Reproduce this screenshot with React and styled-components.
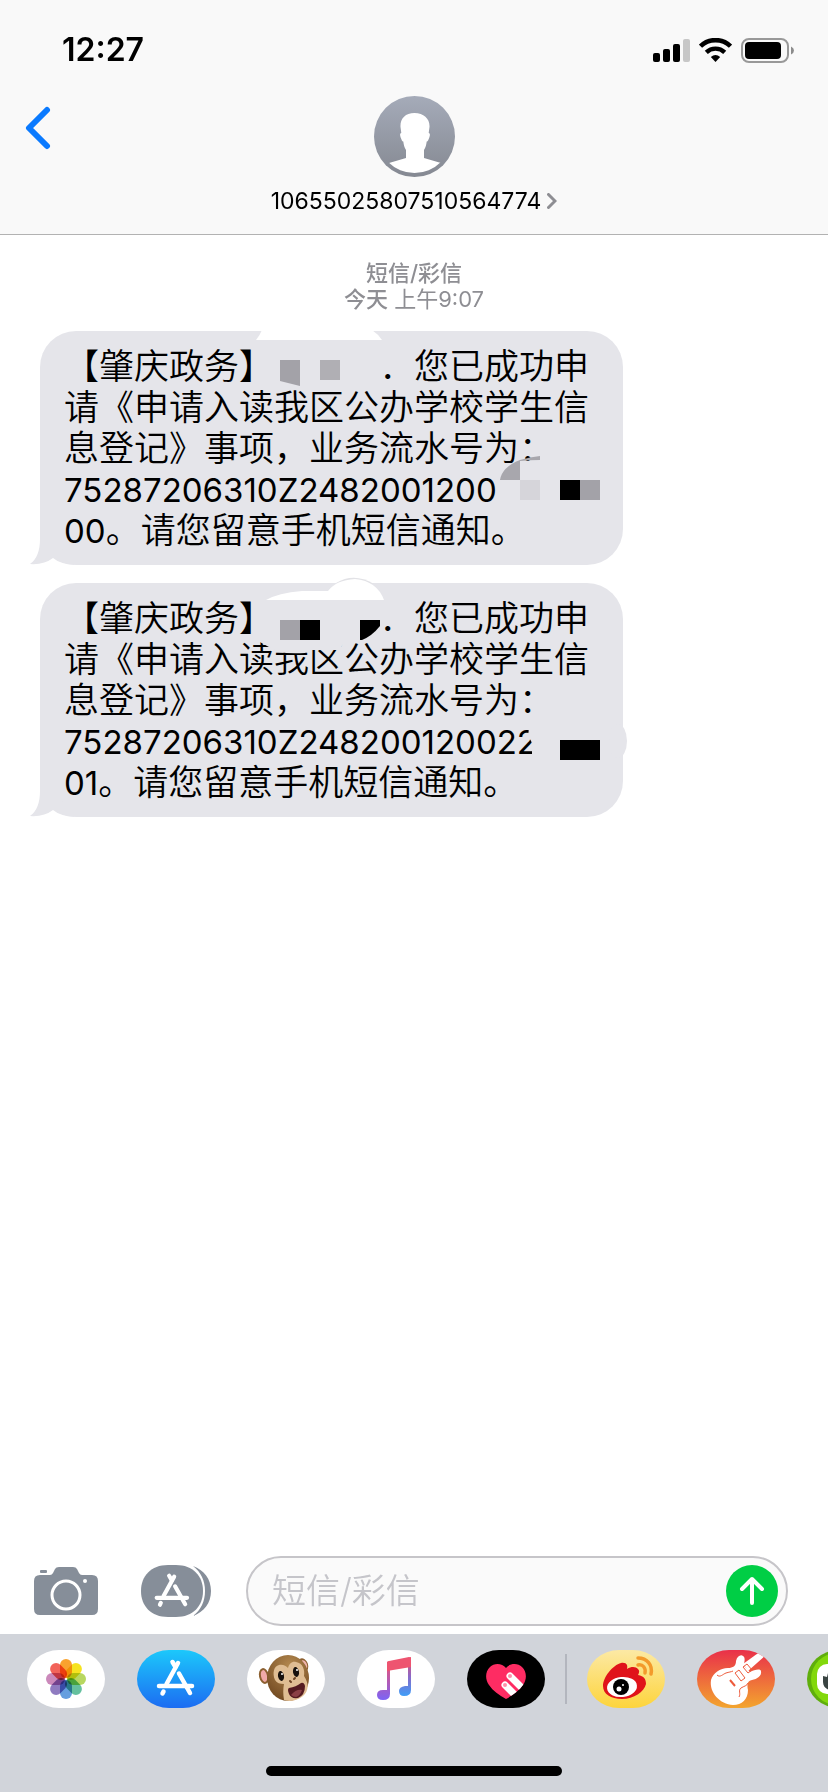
import React from 'react';
import styled, { createGlobalStyle } from 'styled-components';

const GlobalStyle = createGlobalStyle`
    * {
        box-sizing: border-box;
    }
    body {
        margin: 0;
        background: #fff;
        color: #000;
        font-family: Inter, "Noto Sans CJK SC", sans-serif;
        overflow-x: hidden;
    }
    button {
        border: 0;
        padding: 0;
        background: none;
        font: inherit;
        color: inherit;
        cursor: pointer;
    }
    svg {
        display: block;
    }
`;

const Page = styled.div`
    display: flex;
    flex-direction: column;
    min-height: 100vh;
    overflow: hidden;
`;

const Header = styled.header`
    background: #f9f9f9;
    border-bottom: 1px solid #b2b2b2;
`;

const StatusBar = styled.div`
    display: flex;
    justify-content: space-between;
    align-items: center;
    height: 96px;
    padding: 4px 34px 0 62px;
`;

const Clock = styled.time`
    font-size: 32px;
    font-weight: 600;
    line-height: 40px;
`;

const StatusIcons = styled.div`
    display: flex;
    align-items: center;
    gap: 9px;
`;

const NavBar = styled.nav`
    display: grid;
    grid-template-columns: 80px 1fr 80px;
    align-items: start;
    height: 138px;
`;

const BackButton = styled.button`
    width: 80px;
    padding: 10px 0 0 24px;
`;

const Contact = styled.button`
    display: flex;
    flex-direction: column;
    align-items: center;
    gap: 10px;
`;

const ContactName = styled.span`
    display: flex;
    align-items: center;
    gap: 6px;
    font-size: 23px;
    line-height: 28px;
`;

const Thread = styled.main`
    flex: 1;
    padding: 25px 40px;
`;

const Stamp = styled.div`
    color: #8e8e93;
    font-size: 22px;
    line-height: 26px;
    text-align: center;
    margin-bottom: 19px;

    strong {
        font-weight: 500;
    }
`;

const Bubble = styled.article`
    position: relative;
    width: fit-content;
    margin-bottom: 18px;
    padding: 15px 34px 14px 24px;
    border-radius: 36px;
    background: #e5e5ea;
    font-size: 35px;
    font-weight: 350;
    line-height: 41px;
    white-space: nowrap;

    p {
        margin: 0;
    }
`;

const Digits = styled.span`
    font-size: 33px;
    font-weight: 400;
    line-height: 1;
`;

const Blank = styled.span`
    display: inline-block;
    width: 3em;
`;

const Overlay = styled.svg`
    position: absolute;
    left: 0;
    top: 0;
    overflow: visible;
    pointer-events: none;
`;

const Compose = styled.form`
    display: flex;
    align-items: center;
    padding: 0 40px 8px 34px;
`;

const ToolButton = styled.button`
    flex: none;
    margin-right: ${(props) => props.$gap}px;
`;

const Field = styled.label`
    flex: 1;
    display: flex;
    align-items: center;
    min-width: 0;
    height: 70px;
    padding: 0 8px 0 24px;
    border: 2px solid #c6c5c9;
    border-radius: 35px;
    background: #fafafa;
`;

const TextInput = styled.input`
    flex: 1;
    min-width: 0;
    border: 0;
    padding: 0;
    outline: none;
    background: none;
    font-family: inherit;
    font-size: 34px;
    line-height: 48px;

    &::placeholder {
        color: #c5c5ca;
        font-weight: 350;
        opacity: 1;
    }
`;

const SendButton = styled.button`
    flex: none;
`;

const Drawer = styled.footer`
    display: flex;
    flex-direction: column;
    justify-content: space-between;
    align-items: center;
    height: 158px;
    padding: 16px 0;
    background: #d1d4da;
`;

const AppList = styled.div`
    display: flex;
    align-items: center;
    align-self: stretch;
    gap: 32px;
    padding-left: 27px;
    overflow: hidden;
`;

const AppButton = styled.button`
    flex: none;
    width: 78px;
    height: 58px;
    border-radius: 32px / 29px;
    background: ${(props) => props.$fill};
    overflow: hidden;
`;

const Divider = styled.span`
    flex: none;
    width: 2px;
    height: 50px;
    margin: 0 -12px;
    background: #b3b6be;
`;

const HomeBar = styled.div`
    width: 296px;
    height: 10px;
    border-radius: 5px;
    background: #000;
`;

const Signal = () => (
    <svg width="37" height="25" viewBox="0 0 37 25">
        <rect x="0" y="15" width="7" height="9" rx="2" />
        <rect x="10" y="11" width="7" height="13" rx="2" />
        <rect x="20" y="6" width="7" height="18" rx="2" />
        <rect x="30" y="1" width="7" height="23" rx="2" fill="#c7c7c7" />
    </svg>
);

const Wifi = () => (
    <svg width="33" height="25" viewBox="0 0 33 25">
        <path d="M1.5 8.2a21.5 21.5 0 0 1 30 0" fill="none" stroke="#000" strokeWidth="4.6" />
        <path d="M7.3 14.3a13.3 13.3 0 0 1 18.4 0" fill="none" stroke="#000" strokeWidth="4.4" />
        <path d="M11.8 19a7.4 7.4 0 0 1 9.4 0L16.5 24z" />
    </svg>
);

const Battery = () => (
    <svg width="53" height="25" viewBox="0 0 53 25">
        <rect x="1" y="1" width="46" height="23" rx="7" fill="none" stroke="#999" strokeWidth="2" />
        <rect x="4" y="4" width="36" height="17" rx="4" />
        <path d="M50 8.5q3 1.5 3 4t-3 4z" fill="#8c8c8c" />
    </svg>
);

const BackIcon = () => (
    <svg width="28" height="44" viewBox="0 0 28 44">
        <path d="M23 4L5 22L23 40" fill="none" stroke="#0a7aff" strokeWidth="6" strokeLinecap="round" strokeLinejoin="round" />
    </svg>
);

const Avatar = () => (
    <svg width="81" height="81" viewBox="0 0 81 81">
        <defs>
            <linearGradient id="avatar" x1="0" y1="0" x2="0" y2="1">
                <stop offset="0" stopColor="#a5abb9" />
                <stop offset="1" stopColor="#858992" />
            </linearGradient>
            <clipPath id="avatarClip"><circle cx="40.5" cy="40" r="37" /></clipPath>
        </defs>
        <circle cx="40.5" cy="40.5" r="40.5" fill="url(#avatar)" />
        <path
            clipPath="url(#avatarClip)"
            fill="#fff"
            d="M40.5 17C31 17 26 23 26.5 31l.8 6c-1.6.5-1.6 2 0 6 .6 2 1.5 2.4 2 2.6.4 3.4 1 5.6 2.7 8.4v8L15 67v14h52V67l-17-5v-8c1.7-2.8 2.3-5 2.7-8.4.5-.2 1.4-.6 2-2.6 1.6-4 1.6-5.5 0-6l.8-6C56 23 50 17 40.5 17z"
        />
    </svg>
);

const MoreIcon = () => (
    <svg width="10" height="16" viewBox="0 0 10 16">
        <path d="M1.5 1.5L8 8L1.5 14.5" fill="none" stroke="#8e8e93" strokeWidth="3" strokeLinecap="round" />
    </svg>
);

const Tail = () => (
    <path d="M0 194v14q0 18-10 25q14 1 23-6q7 6 22 7l-13-16-2-24z" fill="#e5e5ea" />
);

const FirstMarks = () => (
    <Overlay width="583" height="234" viewBox="0 0 583 234" aria-hidden="true">
        <Tail />
        <path d="M222-1q-2 5-6 10h126q-4-6-10-10z" fill="#fff" />
        <path d="M240 29h20v26l-20-5z" fill="#a3a2a8" />
        <path d="M280 29h20v20h-20z" fill="#b0afb4" />
        <path d="M336 14h30v21h-30z" fill="#e5e5ea" />
        <path d="M457 132h44v42h-44z" fill="#e5e5ea" />
        <path d="M460 149q2-13 20-20q10-3 20-4v4q-10 0-20 1v19z" fill="#a8a7ad" />
        <path d="M480 149h20v20h-20z" fill="#d6d5da" />
        <path d="M520 149h20v20h-20z" />
        <path d="M540 149h20v20h-20z" fill="#a3a2a8" />
    </Overlay>
);

const SecondMarks = () => (
    <Overlay width="583" height="234" viewBox="0 0 583 234" aria-hidden="true">
        <Tail />
        <ellipse cx="578" cy="158" rx="9" ry="17" fill="#e5e5ea" />
        <path d="M296 0q18-11 38 1z" fill="#e2e2e6" />
        <path d="M226 17q12-7 36-9h26q8-11 27-12q22 2 29 21z" fill="#fff" />
        <path d="M240 37h20v20h-20z" fill="#a3a2a8" />
        <path d="M260 37h20v20h-20z" />
        <path d="M336 17h30v18h-30z" fill="#e5e5ea" />
        <path d="M320 37h20v6q-8 10-18 14h-2z" />
        <path d="M218 58h86q-2 6-5 9h-32l-2 3q-15 1-27-1z" fill="#e5e5ea" />
        <path d="M490 140h24v34h-22v-14l-4-8z" fill="#e5e5ea" />
        <path d="M520 157h40v20h-40z" />
    </Overlay>
);

const CameraIcon = () => (
    <svg width="64" height="48" viewBox="0 0 64 48">
        <g fill="#868e99">
            <path d="M6 8h10q2 0 3-2l2-4q1-2 4-2h14q3 0 4 2l2 4q1 2 3 2h10q6 0 6 6v28q0 6-6 6H6q-6 0-6-6V14q0-6 6-6z" />
            <rect x="6" y="3" width="7" height="3" rx="1" />
        </g>
        <circle cx="32" cy="28" r="14" fill="none" stroke="#fff" strokeWidth="3" />
        <circle cx="51" cy="14" r="2" fill="#fff" />
    </svg>
);

const StoreMark = () => (
    <g fill="none" strokeLinecap="round" strokeLinejoin="round">
        <path d="M4 27H37" strokeWidth="4.5" />
        <path d="M23 4L11.5 25" strokeWidth="4.5" />
        <path d="M17.5 3L20.5 8" strokeWidth="4.5" />
        <path d="M24 14.5L35 34" strokeWidth="4.5" />
        <path d="M8.5 32.5L7.5 34.5" strokeWidth="4.5" />
    </g>
);

const AppsIcon = () => (
    <svg width="70" height="52" viewBox="0 0 70 52">
        <path d="M52 1c11 4 18 13 18 25s-7 21-18 25c8-6 12-15 12-25S60 7 52 1z" fill="#868e99" />
        <path d="M27 0h8c17 0 27 11 27 26S52 52 35 52h-8C10 52 0 41 0 26S10 0 27 0z" fill="#868e99" />
        <g transform="translate(12 8) scale(.92)" stroke="#fff"><StoreMark /></g>
    </svg>
);

const SendIcon = () => (
    <svg width="52" height="52" viewBox="0 0 52 52">
        <circle cx="26" cy="26" r="26" fill="#00ce45" />
        <path d="M26 38V14M16 24L26 14L36 24" fill="none" stroke="#fff" strokeWidth="4" strokeLinecap="round" strokeLinejoin="round" />
    </svg>
);

const petals = ['#f89a1c', '#f5e10d', '#b2d453', '#58bb96', '#5896dc', '#8570bb', '#c77fb5', '#f1564c'];

const PhotosIcon = () => (
    <svg width="78" height="58" viewBox="0 0 78 58">
        {petals.map((color, i) => (
            <rect
                key={color}
                x="33"
                y="9"
                width="12"
                height="19"
                rx="6"
                fill={color}
                fillOpacity="0.92"
                transform={`rotate(${i * 45} 39 29)`}
                style={{ mixBlendMode: 'multiply' }}
            />
        ))}
    </svg>
);

const StoreIcon = () => (
    <svg width="78" height="58" viewBox="0 0 78 58">
        <g transform="translate(18 9)" stroke="#fff"><StoreMark /></g>
    </svg>
);

const MonkeyIcon = () => (
    <svg width="78" height="58" viewBox="0 0 78 58">
        <defs>
            <radialGradient id="fur" cx=".55" cy=".25" r=".8">
                <stop offset="0" stopColor="#b58a50" />
                <stop offset="1" stopColor="#6f4720" />
            </radialGradient>
        </defs>
        <ellipse cx="17" cy="26" rx="5" ry="8" fill="#8c6030" transform="rotate(-12 17 26)" />
        <ellipse cx="17" cy="26" rx="3" ry="6" fill="#f0a9a8" transform="rotate(-12 17 26)" />
        <ellipse cx="56" cy="15" rx="5" ry="7" fill="#8c6030" transform="rotate(-20 56 15)" />
        <ellipse cx="57" cy="15" rx="3" ry="5" fill="#f0b4ac" transform="rotate(-20 57 15)" />
        <ellipse cx="41" cy="28" rx="21" ry="23" fill="url(#fur)" />
        <path d="M28 30c-3-7-1-14 4-15 4-1 7 1 9 3 1-4 4-7 8-6 7 1 9 8 8 14 5 7 5 15-1 20-6 5-14 6-19 4-1-6-1-11 0-16-4 0-7-1-9-4z" fill="#dfbd93" />
        <ellipse cx="34" cy="26" rx="3" ry="5" fill="#17110d" transform="rotate(-10 34 26)" />
        <ellipse cx="49" cy="22" rx="3" ry="5" fill="#17110d" transform="rotate(-10 49 22)" />
        <circle cx="35" cy="24" r="1" fill="#fff" />
        <circle cx="50" cy="20" r="1" fill="#fff" />
        <path d="M43 31l1 1M47 29l1-1" stroke="#6d4425" strokeWidth="2" strokeLinecap="round" />
        <path d="M42 38q7-1 12-5q3-1 4 3q0 9-7 12q-7 1-9-4q-2-5 0-6z" fill="#541b21" />
        <path d="M44 45q5-6 11-5q-2 6-6 7q-3 0-5-2z" fill="#8a3f45" />
    </svg>
);

const MusicIcon = () => (
    <svg width="78" height="58" viewBox="0 0 78 58">
        <defs>
            <linearGradient id="stemLeft" x1="0" y1="0" x2="0" y2="1">
                <stop offset="0" stopColor="#f0526d" />
                <stop offset="1" stopColor="#7c63f5" />
            </linearGradient>
            <linearGradient id="stemRight" x1="0" y1="0" x2="0" y2="1">
                <stop offset="0" stopColor="#ee4f69" />
                <stop offset=".5" stopColor="#8a68c8" />
                <stop offset="1" stopColor="#3f9ef8" />
            </linearGradient>
        </defs>
        <path d="M30 12L33 11V44q0 6-7 6-6 0-6-5t6-5h4z" fill="url(#stemLeft)" />
        <path d="M51 8l3-1V40q0 6-7 6-5 0-5-5 0-4 6-5h3z" fill="url(#stemRight)" />
        <path d="M30 13q0-2 2-2L52 7q2 0 2 2v8L30 21z" fill="#ee5470" />
    </svg>
);

const HeartIcon = () => (
    <svg width="78" height="58" viewBox="0 0 78 58">
        <defs>
            <clipPath id="heart">
                <path d="M39 18c4-5 12-5 16-1 5 5 5 12 1 18-4 6-10 10-17 14-7-4-13-8-17-14-4-6-4-13 1-18 4-4 12-4 16 1z" />
            </clipPath>
        </defs>
        <g clipPath="url(#heart)">
            <path d="M0 0h78v58H0z" fill="#fe2c63" />
            <g stroke="#fff" strokeWidth="7" strokeLinecap="round">
                <path d="M43 26l18 18M38 35l16 16" />
            </g>
            <circle cx="43" cy="26" r="2" fill="#ff8faa" />
            <circle cx="38" cy="35" r="2" fill="#ff8faa" />
        </g>
    </svg>
);

const WeiboIcon = () => (
    <svg width="78" height="58" viewBox="0 0 78 58">
        <path d="M16 36c0-9 10-21 18-23 6-1 7 3 6 6 5-3 9-2 11 0 2 2 1 4 0 6 6 1 8 4 8 9-2 8-12 15-24 15-11 0-19-5-19-13z" fill="#e0131a" />
        <ellipse cx="35" cy="37" rx="15" ry="10" fill="#fff" transform="rotate(-6 35 37)" />
        <circle cx="34" cy="37" r="8" />
        <circle cx="32" cy="39" r="2.500" fill="#fff" />
        <circle cx="36" cy="35" r="1" fill="#fff" />
        <g fill="none" stroke="#f39a2b" strokeWidth="3.500" strokeLinecap="round">
            <path d="M51 8c9 0 15 7 13 16" />
            <path d="M51 15c5-1 8 3 7 8" />
        </g>
    </svg>
);

const GuitarIcon = () => (
    <svg width="78" height="58" viewBox="0 0 78 58">
        <g fill="#fff">
            <path d="M14 30c2-7 9-12 17-12 5 0 8-2 8-7 1-5 5-7 7-5 3 2 1 6 1 10l6 6c4-2 10-4 11-1 1 5-4 8-9 9-5 1-5 5-4 10 0 9-6 15-15 15-13-1-24-12-22-25z" />
            <path d="M46 14L64 1l5 4-18 16z" />
        </g>
        <g fill="none" stroke="#ed5a3b" strokeWidth="1">
            <path d="M20 25c3 3 6-1 9-2s5-1 7-2M42 47c2-3-1-7 2-9s6-2 7-5" />
            <path d="M38 23l4-3 6 8-4 3zM46 17l4-3 5 6-4 3z" />
            <path d="M33 30l5 6" strokeWidth="2" />
        </g>
    </svg>
);

const FaceIcon = () => (
    <svg width="78" height="58" viewBox="0 0 78 58">
        <rect x="4" y="3" width="70" height="52" rx="26" fill="#82d80b" />
        <rect x="10" y="14" width="58" height="30" rx="10" fill="#fff" />
        <path d="M16 26l4 1 1-4 3 1v16c-4 0-8-3-8-8z" fill="#3a4442" />
    </svg>
);

const apps = [
    { name: '照片', fill: '#fff', icon: <PhotosIcon /> },
    { name: 'App Store', fill: 'linear-gradient(#1cc8fb, #1c6cf2)', icon: <StoreIcon /> },
    { name: '拟我表情', fill: '#fff', icon: <MonkeyIcon /> },
    { name: '音乐', fill: '#fff', icon: <MusicIcon /> },
    { name: 'Digital Touch', fill: '#000', icon: <HeartIcon /> },
];

const moreApps = [
    { name: '微博', fill: 'linear-gradient(#fce9a4, #fdd43c)', icon: <WeiboIcon /> },
    { name: '库乐队', fill: 'linear-gradient(#e9304a, #f3a52e)', icon: <GuitarIcon /> },
    { name: '贴纸', fill: '#5fae0c', icon: <FaceIcon /> },
];

const renderApp = (app) => (
    <AppButton key={app.name} type="button" aria-label={app.name} $fill={app.fill}>
        {app.icon}
    </AppButton>
);

const Message = (props) => (
    <Bubble>
        <p>
            【肇庆政务】<Blank />：您已成功申<br />
            请《申请入读我区公办学校学生信<br />
            息登记》事项，业务流水号为：<br />
            <Digits>{props.serial}</Digits><br />
            <Digits>{props.suffix}</Digits>。请您留意手机短信通知。
        </p>
        {props.children}
    </Bubble>
);

const App = () => {
    return (
        <>
            <GlobalStyle />
            <Page>
                <Header>
                    <StatusBar>
                        <Clock>12:27</Clock>
                        <StatusIcons>
                            <Signal />
                            <Wifi />
                            <Battery />
                        </StatusIcons>
                    </StatusBar>
                    <NavBar>
                        <BackButton type="button" aria-label="返回"><BackIcon /></BackButton>
                        <Contact type="button">
                            <Avatar />
                            <ContactName>10655025807510564774<MoreIcon /></ContactName>
                        </Contact>
                    </NavBar>
                </Header>

                <Thread>
                    <Stamp>
                        <strong>短信/彩信</strong><br />
                        <strong>今天</strong> 上午9:07
                    </Stamp>
                    <Message serial="75287206310Z2482001200" suffix="00"><FirstMarks /></Message>
                    <Message serial="75287206310Z248200120022" suffix="01"><SecondMarks /></Message>
                </Thread>

                <Compose onSubmit={(e) => e.preventDefault()}>
                    <ToolButton type="button" aria-label="相机" $gap={43}><CameraIcon /></ToolButton>
                    <ToolButton type="button" aria-label="应用" $gap={35}><AppsIcon /></ToolButton>
                    <Field>
                        <TextInput type="text" aria-label="短信/彩信" placeholder="短信/彩信" />
                        <SendButton type="submit" aria-label="发送"><SendIcon /></SendButton>
                    </Field>
                </Compose>

                <Drawer>
                    <AppList>
                        {apps.map(renderApp)}
                        <Divider />
                        {moreApps.map(renderApp)}
                    </AppList>
                    <HomeBar />
                </Drawer>
            </Page>
        </>
    );
};

export default App;
